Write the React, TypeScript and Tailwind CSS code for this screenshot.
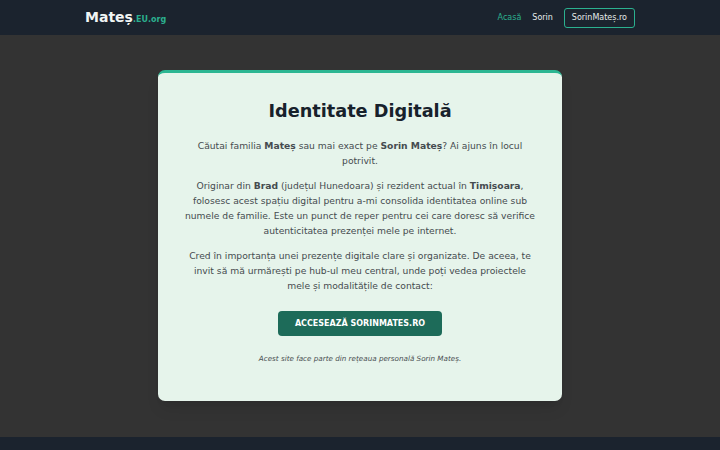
import React from 'react';

export default function App() {
  return (
    <div className="min-h-[450px] flex flex-col bg-[#333333] font-['DejaVu_Sans',sans-serif]">
      <header className="h-[35px] bg-[#1b232e] flex items-center">
        <div className="w-[550px] mx-auto flex items-center justify-between">
          <div className="flex items-baseline">
            <span className="text-[14px] font-bold text-[#f1f5f4]">Mateș</span>
            <span className="text-[8px] font-bold text-[#2bb08f]">.EU.org</span>
          </div>
          <nav className="flex items-center gap-[11px] text-[8px]">
            <a className="text-[#2bb08f]">Acasă</a>
            <a className="text-[#e6eceb]">Sorin</a>
            <a className="px-[7px] py-[3px] border border-[#2bb08f] rounded-[3px] text-[#e6eceb]">SorinMateș.ro</a>
          </nav>
        </div>
      </header>

      <main className="flex-1 flex justify-center pt-[35px] pb-[36px]">
        <div className="w-[404px] bg-[#e6f4eb] rounded-[7px] border-t-[3px] border-[#2cb692] shadow-lg px-[26px] pt-[26px] pb-[36px] text-center">
          <h1 className="text-[17.7px] leading-[24px] font-bold text-[#17212b] mb-[15px]">Identitate Digitală</h1>
          <p className="text-[9.2px] leading-[15px] text-[#454b4f] mb-[10px]">
            Căutai familia <b>Mateș</b> sau mai exact pe <b>Sorin Mateș</b>? Ai ajuns în locul potrivit.
          </p>
          <p className="text-[9.2px] leading-[15px] text-[#454b4f] mb-[10px]">
            Originar din <b>Brad</b> (județul Hunedoara) și rezident actual în <b>Timișoara</b>, folosesc acest spațiu digital pentru a-mi consolida identitatea online sub numele de familie. Este un punct de reper pentru cei care doresc să verifice autenticitatea prezenței mele pe internet.
          </p>
          <p className="text-[9.2px] leading-[15px] text-[#454b4f]">
            Cred în importanța unei prezențe digitale clare și organizate. De aceea, te invit să mă urmărești pe hub-ul meu central, unde poți vedea proiectele mele și modalitățile de contact:
          </p>
          <a className="inline-flex items-center h-[25px] mt-[18px] px-[17px] bg-[#1d6b59] rounded-[4px] text-white text-[8px] font-bold">
            ACCESEAZĂ SORINMATES.RO
          </a>
          <p className="mt-[17px] text-[7.2px] leading-[11px] italic text-[#4a4f52]">
            Acest site face parte din rețeaua personală Sorin Mateș.
          </p>
        </div>
      </main>

      <footer className="h-[13px] bg-[#1b232e]" />
    </div>
  );
}
